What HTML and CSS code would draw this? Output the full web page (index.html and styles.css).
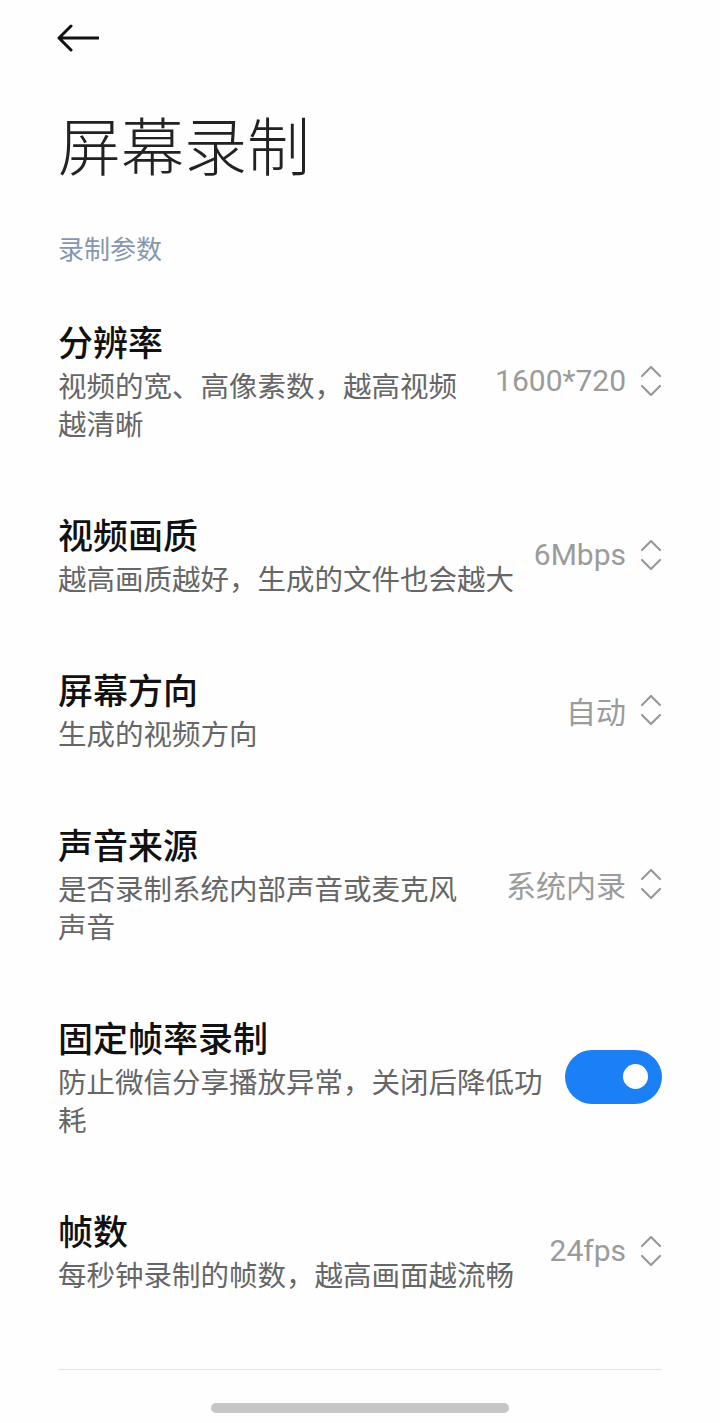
FILE: index.html
```html
<!DOCTYPE html>
<html lang="zh-CN">
<head>
  <meta charset="UTF-8">
  <meta name="viewport" content="width=device-width, initial-scale=1.0">
  <title>屏幕录制</title>
  <link rel="stylesheet" href="styles.css">
</head>
<body>
  <div class="page">
    <div class="topbar">
      <svg class="back" width="42" height="28" viewBox="0 0 42 28">
        <path d="M2 14 H41 M14 2 L2 14 L14 26" fill="none" stroke="#111" stroke-width="3" stroke-linecap="round" stroke-linejoin="round"/>
      </svg>
    </div>
    <h1 class="title">屏幕录制</h1>
    <div class="section-label">录制参数</div>

    <div class="list">
      <div class="item">
        <div class="item-text">
          <div class="item-title">分辨率</div>
          <div class="item-sub">视频的宽、高像素数，越高视频越清晰</div>
        </div>
        <div class="item-value">1600*720<span class="chevrons"></span></div>
      </div>
      <div class="item">
        <div class="item-text">
          <div class="item-title">视频画质</div>
          <div class="item-sub">越高画质越好，生成的文件也会越大</div>
        </div>
        <div class="item-value">6Mbps<span class="chevrons"></span></div>
      </div>
      <div class="item">
        <div class="item-text">
          <div class="item-title">屏幕方向</div>
          <div class="item-sub">生成的视频方向</div>
        </div>
        <div class="item-value">自动<span class="chevrons"></span></div>
      </div>
      <div class="item">
        <div class="item-text">
          <div class="item-title">声音来源</div>
          <div class="item-sub">是否录制系统内部声音或麦克风<br>声音</div>
        </div>
        <div class="item-value">系统内录<span class="chevrons"></span></div>
      </div>
      <div class="item">
        <div class="item-text">
          <div class="item-title">固定帧率录制</div>
          <div class="item-sub">防止微信分享播放异常，关闭后降低功耗</div>
        </div>
        <div class="toggle on"><span class="knob"></span></div>
      </div>
      <div class="item">
        <div class="item-text">
          <div class="item-title">帧数</div>
          <div class="item-sub">每秒钟录制的帧数，越高画面越流畅</div>
        </div>
        <div class="item-value">24fps<span class="chevrons"></span></div>
      </div>
    </div>

    <div class="divider"></div>
  </div>
  <div class="home-bar"></div>
</body>
</html>
```

FILE: styles.css
```css
body {
  margin: 0;
  background: #fefefe;
  font-family: Roboto, "Noto Sans CJK SC", sans-serif;
  color: #111;
}
.page {
  padding: 0 58px;
}
.topbar {
  height: 76px;
  display: flex;
  align-items: center;
}
.back {
  display: block;
  margin-left: -1px;
}
.title {
  margin: 27px 0 0;
  font-size: 63px;
  line-height: 80px;
  font-weight: 300;
  color: #222;
  font-family: "Noto Sans CJK SC", sans-serif;
}
.section-label {
  margin-top: 48px;
  font-size: 26px;
  line-height: 34px;
  color: #8796b0;
  font-family: "Noto Sans CJK SC", sans-serif;
}
.list {
  margin-top: 19px;
}
.item {
  display: flex;
  align-items: center;
  padding: 35px 0;
}
.item-text {
  flex: 1;
  min-width: 0;
  font-family: "Noto Sans CJK SC", sans-serif;
}
.item-title {
  font-size: 35px;
  line-height: 44px;
  font-weight: 500;
  color: #111;
}
.item-sub {
  margin-top: 3px;
  font-size: 28.5px;
  line-height: 38px;
  color: #666;
}
.item-value {
  flex-shrink: 0;
  margin-left: 14px;
  display: flex;
  align-items: center;
  font-size: 30px;
  color: #9b9b9b;
}
.chevrons {
  display: inline-block;
  width: 22px;
  height: 32px;
  margin-left: 14px;
  background:
    url("data:image/svg+xml,%3Csvg xmlns='http://www.w3.org/2000/svg' width='22' height='32' viewBox='0 0 22 32'%3E%3Cpath d='M2 11 L11 2 L20 11 M2 21 L11 30 L20 21' fill='none' stroke='%23999' stroke-width='2.2' stroke-linecap='round' stroke-linejoin='round'/%3E%3C/svg%3E") no-repeat;
}
.toggle {
  flex-shrink: 0;
  margin-left: 14px;
  width: 97px;
  height: 54px;
  border-radius: 27px;
  background: #ccc;
  display: flex;
  align-items: center;
  box-sizing: border-box;
  padding: 0 14px;
}
.toggle.on {
  background: #1b7ff5;
  justify-content: flex-end;
}
.knob {
  width: 25px;
  height: 25px;
  border-radius: 50%;
  background: #fff;
}
.divider {
  margin-top: 41px;
  height: 1px;
  background: #e2e2e2;
}
.home-bar {
  width: 298px;
  height: 10px;
  border-radius: 5px;
  background: #c6c6c6;
  margin: 33px auto 0;
}
```
